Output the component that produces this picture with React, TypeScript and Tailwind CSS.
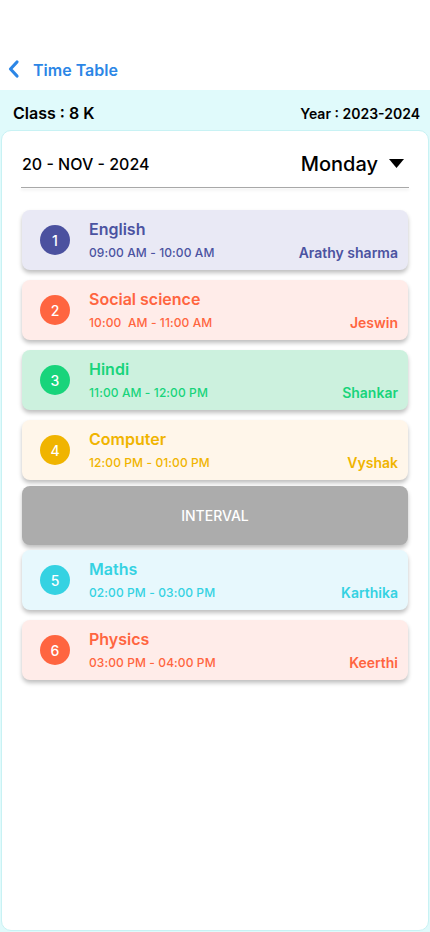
const periods = [
  { n: 1, subject: "English", time: "09:00 AM - 10:00 AM", teacher: "Arathy sharma", bg: "bg-[#e9e9f5]", fg: "text-[#4b53a1]", dot: "bg-[#4b519f]" },
  { n: 2, subject: "Social science", time: "10:00  AM - 11:00 AM", teacher: "Jeswin", bg: "bg-[#ffece9]", fg: "text-[#ff6540]", dot: "bg-[#ff6540]" },
  { n: 3, subject: "Hindi", time: "11:00 AM - 12:00 PM", teacher: "Shankar", bg: "bg-[#ccf1de]", fg: "text-[#18d47b]", dot: "bg-[#18d47b]" },
  { n: 4, subject: "Computer", time: "12:00 PM - 01:00 PM", teacher: "Vyshak", bg: "bg-[#fff6ea]", fg: "text-[#f0b400]", dot: "bg-[#f0b400]" },
  { n: 0 },
  { n: 5, subject: "Maths", time: "02:00 PM - 03:00 PM", teacher: "Karthika", bg: "bg-[#e7f8fd]", fg: "text-[#35d2e2]", dot: "bg-[#35d2e2]" },
  { n: 6, subject: "Physics", time: "03:00 PM - 04:00 PM", teacher: "Keerthi", bg: "bg-[#ffece9]", fg: "text-[#ff6540]", dot: "bg-[#ff6540]" },
];

const PeriodCard = ({ p }: { p: any }) => {
  if (p.n === 0) {
    return (
      <div className="h-[59px] rounded-lg bg-[#acacac] shadow-[0_3px_4px_rgba(0,0,0,0.25)] flex items-center justify-center -mt-[4px] mb-[-5px]">
        <span className="text-white text-[14px] font-medium">INTERVAL</span>
      </div>
    );
  }
  return (
    <div className={`h-[60px] rounded-lg ${p.bg} shadow-[0_3px_4px_rgba(0,0,0,0.25)] flex items-center pl-[18px] pr-[10px]`}>
      <div className={`w-[30px] h-[30px] rounded-full ${p.dot} text-white text-[14px] font-medium flex items-center justify-center shrink-0`}>
        {p.n}
      </div>
      <div className={`flex-1 self-stretch ml-[19px] pt-[9px] ${p.fg}`}>
        <div className="text-[16px] font-semibold leading-[20px]">{p.subject}</div>
        <div className="flex justify-between items-center mt-[4px] h-[20px]">
          <span className="text-[12px] font-medium whitespace-pre tracking-[0.1px]">{p.time}</span>
          <span className="text-[14px] font-semibold -mt-[2px]">{p.teacher}</span>
        </div>
      </div>
    </div>
  );
};

export default function App() {
  return (
    <div className="w-[430px] h-[932px] bg-white font-['Inter',sans-serif] flex flex-col overflow-hidden">
      <div className="h-[90px] flex items-end pb-[10px] pl-[7px]">
        <svg width="14" height="20" viewBox="0 0 14 20" className="mb-[1px]">
          <path d="M10 3 L3.5 10 L10 17" fill="none" stroke="#2b86e6" strokeWidth="3.2" strokeLinecap="round" strokeLinejoin="round" />
        </svg>
        <span className="ml-[12px] text-[#2b86e6] text-[16px] font-semibold leading-[20px]">Time Table</span>
      </div>
      <div className="flex-1 bg-[#e0fafb] flex flex-col">
        <div className="h-[40px] flex items-center justify-between px-[13px] pr-[10px] pt-[6px]">
          <span className="text-[16px] font-semibold text-black">Class : 8 K</span>
          <span className="text-[14px] font-semibold text-black">Year : 2023-2024</span>
        </div>
        <div className="flex-1 mx-[1px] mb-[1px] bg-white rounded-[10px] border border-[#c8f2f4] flex flex-col">
          <div className="flex items-center justify-between pl-[20px] pr-[24px] pt-[10px] h-[56px]">
            <span className="text-[16px] font-medium text-black">20 - NOV - 2024</span>
            <div className="flex items-center">
              <span className="text-[20px] font-medium text-black">Monday</span>
              <svg width="15" height="10" viewBox="0 0 15 10" className="ml-[11px]">
                <path d="M0 0 H15 L7.5 9 Z" fill="#000" />
              </svg>
            </div>
          </div>
          <div className="mx-[19px] h-[1px] bg-[#a8a8a8] shadow-[0_2px_3px_rgba(0,0,0,0.12)]" />
          <div className="flex flex-col gap-[10px] px-[20px] pt-[22px]">
            {periods.map((p, i) => (
              <PeriodCard key={i} p={p} />
            ))}
          </div>
        </div>
      </div>
    </div>
  );
}
